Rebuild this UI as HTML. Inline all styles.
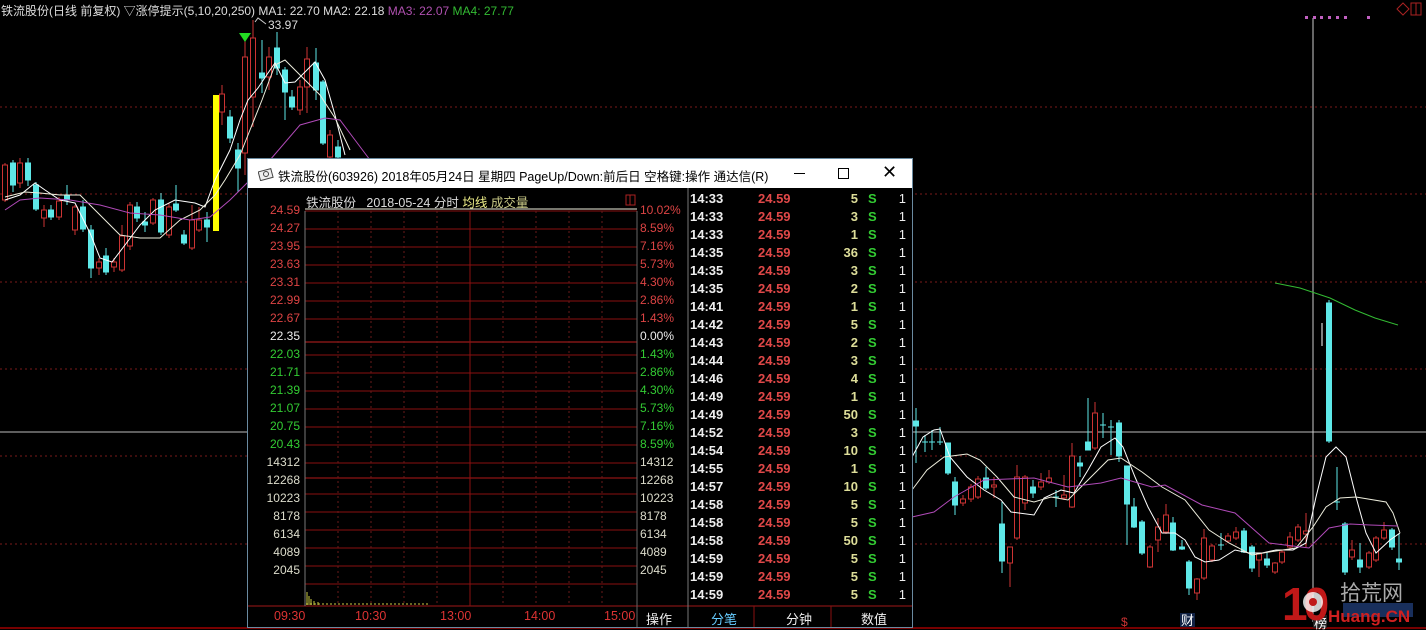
<!DOCTYPE html>
<html><head><meta charset="utf-8"><style>
body{margin:0;width:1426px;height:630px;background:#000;overflow:hidden;position:relative;font-family:"Liberation Sans","Noto Sans CJK SC",sans-serif}
.a{position:absolute;white-space:nowrap}
.top{font-size:12px;top:2px;left:1px;color:#ddd}
.win{position:absolute;left:247px;top:158px;width:664px;height:468px;border:1px solid #6a8aa0;background:#000}
.tb{position:absolute;left:0;top:0;width:664px;height:29px;background:#fff;color:#000;font-size:12.5px}
.pl{font-size:12px;width:52px;text-align:right;left:0}
.pr{font-size:12px;left:392px}
.row{position:absolute;left:442px;width:222px;height:18px;font-size:13px;font-weight:bold}
.row span{position:absolute;top:1px}
</style></head><body>
<svg width="1426" height="630" style="position:absolute;left:0;top:0">
<g stroke="#7a1a1a" stroke-dasharray="2,3" stroke-width="1">
<line x1="0" y1="107" x2="1426" y2="107"/><line x1="0" y1="194" x2="1426" y2="194"/><line x1="0" y1="282" x2="1426" y2="282"/><line x1="0" y1="369" x2="1426" y2="369"/><line x1="0" y1="456" x2="1426" y2="456"/><line x1="0" y1="544" x2="1426" y2="544"/>
</g>
<line x1="0" y1="432" x2="1426" y2="432" stroke="#bbb"/>
<line x1="1313" y1="18" x2="1313" y2="622" stroke="#ccc"/>
<rect x="213" y="95" width="6" height="136" fill="#ff0"/>
<g stroke-width="1">
<g stroke="#c33" fill="#000">
<line x1="5" y1="163" x2="5" y2="202"/><rect x="2.5" y="165" width="5" height="35"/>
<line x1="20" y1="158" x2="20" y2="188"/><rect x="17.5" y="163" width="5" height="20"/>
<line x1="44" y1="205" x2="44" y2="227"/><rect x="41.5" y="210" width="5" height="8"/>
<line x1="59" y1="197" x2="59" y2="220"/><rect x="56.5" y="201" width="5" height="16"/>
<line x1="75" y1="205" x2="75" y2="235"/><rect x="72.5" y="207" width="5" height="23"/>
<line x1="99" y1="258" x2="99" y2="275"/><rect x="96.5" y="262" width="5" height="6"/>
<line x1="114" y1="258" x2="114" y2="272"/><rect x="111.5" y="262" width="5" height="5"/>
<line x1="122" y1="225" x2="122" y2="272"/><rect x="119.5" y="236" width="5" height="34"/>
<line x1="130" y1="202" x2="130" y2="250"/><rect x="127.5" y="205" width="5" height="41"/>
<line x1="153" y1="198" x2="153" y2="225"/><rect x="150.5" y="200" width="5" height="23"/>
<line x1="169" y1="203" x2="169" y2="238"/><rect x="166.5" y="207" width="5" height="28"/>
<line x1="192" y1="205" x2="192" y2="250"/><rect x="189.5" y="220" width="5" height="28"/>
<line x1="199" y1="207" x2="199" y2="232"/><rect x="196.5" y="220" width="5" height="10"/>
<line x1="222" y1="85" x2="222" y2="125"/><rect x="219.5" y="94" width="5" height="18"/>
<line x1="245" y1="40" x2="245" y2="175"/><rect x="242.5" y="57" width="5" height="96"/>
<line x1="253" y1="20" x2="253" y2="127"/><rect x="250.5" y="38" width="5" height="59"/>
<line x1="269" y1="47" x2="269" y2="90"/><rect x="266.5" y="57" width="5" height="20"/>
<line x1="300" y1="80" x2="300" y2="115"/><rect x="297.5" y="87" width="5" height="23"/>
<line x1="307" y1="47" x2="307" y2="113"/><rect x="304.5" y="59" width="5" height="28"/>
<line x1="330" y1="130" x2="330" y2="160"/><rect x="327.5" y="135" width="5" height="22"/>
</g>
<g stroke="#5ee8e8" fill="#5ee8e8">
<line x1="13" y1="160" x2="13" y2="192"/><rect x="10.5" y="163" width="5" height="22"/>
<line x1="28" y1="158" x2="28" y2="186"/><rect x="25.5" y="163" width="5" height="17"/>
<line x1="36" y1="182" x2="36" y2="211"/><rect x="33.5" y="185" width="5" height="24"/>
<line x1="51" y1="205" x2="51" y2="220"/><rect x="48.5" y="210" width="5" height="7"/>
<line x1="67" y1="185" x2="67" y2="205"/><rect x="64.5" y="195" width="5" height="5"/>
<line x1="83" y1="200" x2="83" y2="232"/><rect x="80.5" y="207" width="5" height="22"/>
<line x1="91" y1="225" x2="91" y2="278"/><rect x="88.5" y="230" width="5" height="38"/>
<line x1="106" y1="248" x2="106" y2="275"/><rect x="103.5" y="256" width="5" height="16"/>
<line x1="137" y1="202" x2="137" y2="222"/><rect x="134.5" y="207" width="5" height="11"/>
<line x1="145" y1="212" x2="145" y2="232"/><rect x="142.5" y="222" width="5" height="3"/>
<line x1="161" y1="193" x2="161" y2="235"/><rect x="158.5" y="200" width="5" height="32"/>
<line x1="176" y1="185" x2="176" y2="212"/><rect x="173.5" y="204" width="5" height="6"/>
<line x1="184" y1="230" x2="184" y2="245"/><rect x="181.5" y="235" width="5" height="8"/>
<line x1="207" y1="212" x2="207" y2="242"/><rect x="204.5" y="220" width="5" height="7"/>
<line x1="230" y1="110" x2="230" y2="143"/><rect x="227.5" y="117" width="5" height="21"/>
<line x1="238" y1="143" x2="238" y2="192"/><rect x="235.5" y="150" width="5" height="18"/>
<line x1="262" y1="40" x2="262" y2="93"/><rect x="259.5" y="73" width="5" height="5"/>
<line x1="277" y1="32" x2="277" y2="75"/><rect x="274.5" y="48" width="5" height="20"/>
<line x1="285" y1="67" x2="285" y2="120"/><rect x="282.5" y="70" width="5" height="22"/>
<line x1="292" y1="90" x2="292" y2="110"/><rect x="289.5" y="97" width="5" height="10"/>
<line x1="316" y1="48" x2="316" y2="100"/><rect x="313.5" y="63" width="5" height="27"/>
<line x1="323" y1="80" x2="323" y2="145"/><rect x="320.5" y="82" width="5" height="61"/>
<line x1="338" y1="140" x2="338" y2="160"/><rect x="335.5" y="147" width="5" height="10"/>
</g>
<polygon points="239,33 251,33 245,42" fill="#2d2"/>
<text x="268" y="29" fill="#ddd" font-size="12" font-family="Liberation Sans">33.97</text>
<polyline points="255,22 258,18 266,24" stroke="#ccc" fill="none"/>
<polyline fill="none" stroke="#fff" points="5,200 20,195 35,183 45,190 60,200 75,203 90,233 100,258 112,262 125,245 140,225 155,210 175,200 195,203 205,207 215,180 230,150 240,120 248,100 258,88 268,73 275,63 285,83 295,82 305,72 315,62 325,80 335,115 345,155"/>
<polyline fill="none" stroke="#eed" points="5,197 25,192 40,193 60,195 80,195 100,215 120,235 140,238 160,238 180,220 200,210 215,195 225,180 240,155 250,130 262,100 275,65 285,60 300,75 320,95 335,118 350,150"/>
<polyline fill="none" stroke="#b04ab8" points="5,210 20,200 40,198 70,200 100,205 130,213 160,215 190,220 210,217 230,200 245,185 270,160 300,125 325,118 340,120 355,140 370,160"/>
<g stroke="#c33" fill="#000">
<line x1="963" y1="495" x2="963" y2="506"/><rect x="960.5" y="499" width="5" height="4"/>
<line x1="971" y1="484" x2="971" y2="502"/><rect x="968.5" y="487" width="5" height="12"/>
<line x1="978" y1="476" x2="978" y2="499"/><rect x="975.5" y="479" width="5" height="18"/>
<line x1="994" y1="477" x2="994" y2="498"/><rect x="991.5" y="485" width="5" height="2"/>
<line x1="1010" y1="547" x2="1010" y2="587"/><rect x="1007.5" y="547" width="5" height="16"/>
<line x1="1017" y1="465" x2="1017" y2="540"/><rect x="1014.5" y="477" width="5" height="61"/>
<line x1="1025" y1="475" x2="1025" y2="510"/><rect x="1022.5" y="477" width="5" height="26"/>
<line x1="1041" y1="473" x2="1041" y2="490"/><rect x="1038.5" y="482" width="5" height="5"/>
<line x1="1049" y1="470" x2="1049" y2="484"/><rect x="1046.5" y="478" width="5" height="4"/>
<line x1="1064" y1="475" x2="1064" y2="500"/><rect x="1061.5" y="495" width="5" height="3"/>
<line x1="1072" y1="443" x2="1072" y2="508"/><rect x="1069.5" y="456" width="5" height="51"/>
<line x1="1095" y1="402" x2="1095" y2="450"/><rect x="1092.5" y="413" width="5" height="35"/>
<line x1="1150" y1="545" x2="1150" y2="568"/><rect x="1147.5" y="547" width="5" height="20"/>
<line x1="1158" y1="518" x2="1158" y2="552"/><rect x="1155.5" y="527" width="5" height="13"/>
<line x1="1166" y1="504" x2="1166" y2="534"/><rect x="1163.5" y="515" width="5" height="17"/>
<line x1="1197" y1="578" x2="1197" y2="600"/><rect x="1194.5" y="579" width="5" height="14"/>
<line x1="1204" y1="529" x2="1204" y2="580"/><rect x="1201.5" y="538" width="5" height="40"/>
<line x1="1212" y1="544" x2="1212" y2="562"/><rect x="1209.5" y="546" width="5" height="14"/>
<line x1="1228" y1="533" x2="1228" y2="543"/><rect x="1225.5" y="536" width="5" height="5"/>
<line x1="1236" y1="527" x2="1236" y2="540"/><rect x="1233.5" y="532" width="5" height="6"/>
<line x1="1259" y1="553" x2="1259" y2="577"/><rect x="1256.5" y="554" width="5" height="6"/>
<line x1="1275" y1="562" x2="1275" y2="574"/><rect x="1272.5" y="563" width="5" height="9"/>
<line x1="1282" y1="550" x2="1282" y2="564"/><rect x="1279.5" y="552" width="5" height="10"/>
<line x1="1290" y1="532" x2="1290" y2="550"/><rect x="1287.5" y="537" width="5" height="10"/>
<line x1="1298" y1="524" x2="1298" y2="542"/><rect x="1295.5" y="527" width="5" height="13"/>
<line x1="1306" y1="513" x2="1306" y2="547"/><rect x="1303.5" y="531" width="5" height="3"/>
<line x1="1352" y1="540" x2="1352" y2="560"/><rect x="1349.5" y="550" width="5" height="7"/>
<line x1="1369" y1="551" x2="1369" y2="569"/><rect x="1366.5" y="553" width="5" height="14"/>
<line x1="1376" y1="536" x2="1376" y2="562"/><rect x="1373.5" y="538" width="5" height="22"/>
<line x1="1384" y1="522" x2="1384" y2="540"/><rect x="1381.5" y="530" width="5" height="8"/>
</g>
<g stroke="#5ee8e8" fill="#5ee8e8">
<line x1="916" y1="408" x2="916" y2="463"/><rect x="913.5" y="421" width="5" height="5"/>
<line x1="925" y1="435" x2="925" y2="452"/><line x1="922" y1="442" x2="928" y2="442"/>
<line x1="932" y1="430" x2="932" y2="450"/><line x1="929" y1="442" x2="935" y2="442"/>
<line x1="940" y1="427" x2="940" y2="445"/><line x1="937" y1="442" x2="943" y2="442"/>
<line x1="948" y1="443" x2="948" y2="475"/><rect x="945.5" y="443" width="5" height="30"/>
<line x1="955" y1="477" x2="955" y2="515"/><rect x="952.5" y="482" width="5" height="23"/>
<line x1="986" y1="467" x2="986" y2="490"/><rect x="983.5" y="478" width="5" height="10"/>
<line x1="1002" y1="502" x2="1002" y2="573"/><rect x="999.5" y="524" width="5" height="37"/>
<line x1="1033" y1="480" x2="1033" y2="498"/><rect x="1030.5" y="487" width="5" height="6"/>
<line x1="1056" y1="490" x2="1056" y2="507"/><line x1="1053" y1="497" x2="1059" y2="497"/>
<line x1="1080" y1="456" x2="1080" y2="477"/><rect x="1077.5" y="463" width="5" height="3"/>
<line x1="1088" y1="398" x2="1088" y2="450"/><rect x="1085.5" y="442" width="5" height="8"/>
<line x1="1103" y1="413" x2="1103" y2="438"/><line x1="1100" y1="425" x2="1106" y2="425"/>
<line x1="1111" y1="420" x2="1111" y2="455"/><line x1="1108" y1="427" x2="1114" y2="427"/>
<line x1="1119" y1="420" x2="1119" y2="462"/><rect x="1116.5" y="423" width="5" height="33"/>
<line x1="1127" y1="466" x2="1127" y2="545"/><rect x="1124.5" y="466" width="5" height="38"/>
<line x1="1134" y1="498" x2="1134" y2="528"/><rect x="1131.5" y="507" width="5" height="20"/>
<line x1="1142" y1="520" x2="1142" y2="555"/><rect x="1139.5" y="522" width="5" height="31"/>
<line x1="1173" y1="517" x2="1173" y2="551"/><rect x="1170.5" y="523" width="5" height="27"/>
<line x1="1182" y1="540" x2="1182" y2="550"/><rect x="1179.5" y="547" width="5" height="2"/>
<line x1="1189" y1="560" x2="1189" y2="595"/><rect x="1186.5" y="562" width="5" height="26"/>
<line x1="1221" y1="533" x2="1221" y2="550"/><line x1="1218" y1="545" x2="1224" y2="545"/>
<line x1="1244" y1="528" x2="1244" y2="553"/><rect x="1241.5" y="531" width="5" height="21"/>
<line x1="1252" y1="545" x2="1252" y2="572"/><rect x="1249.5" y="547" width="5" height="21"/>
<line x1="1267" y1="552" x2="1267" y2="568"/><rect x="1264.5" y="559" width="5" height="6"/>
<line x1="1329" y1="300" x2="1329" y2="443"/><rect x="1326.5" y="303" width="5" height="138"/>
<line x1="1337" y1="467" x2="1337" y2="510"/><line x1="1334" y1="502" x2="1340" y2="502"/>
<line x1="1345" y1="522" x2="1345" y2="575"/><rect x="1342.5" y="524" width="5" height="48"/>
<line x1="1360" y1="543" x2="1360" y2="573"/><rect x="1357.5" y="560" width="5" height="7"/>
<line x1="1392" y1="528" x2="1392" y2="550"/><rect x="1389.5" y="530" width="5" height="17"/>
<line x1="1399" y1="533" x2="1399" y2="570"/><rect x="1396.5" y="559" width="5" height="3"/>
</g>
<line x1="1322" y1="323" x2="1322" y2="346" stroke="#fff"/>
<polyline fill="none" stroke="#fff" points="912,457 923,437 934,430 940,429 950,457 967,477 984,490 1001,500 1011,512 1034,515 1044,498 1061,490 1074,493 1088,470 1101,447 1115,438 1123,447 1135,477 1148,507 1162,533 1175,533 1185,540 1195,557 1205,562 1219,560 1235,550 1249,553 1262,553 1276,550 1293,550 1306,543 1316,497 1326,457 1336,447 1346,457 1356,497 1366,533 1376,553 1390,540 1400,533"/>
<polyline fill="none" stroke="#eed" points="912,490 927,470 944,457 967,454 980,460 997,477 1014,497 1034,502 1051,497 1068,500 1088,480 1108,460 1121,458 1142,472 1162,487 1185,500 1209,530 1229,543 1252,555 1269,552 1296,548 1313,527 1326,507 1340,498 1356,497 1386,502 1393,513 1400,533"/>
<polyline fill="none" stroke="#b04ab8" points="912,517 934,512 954,497 984,480 1034,478 1068,487 1101,483 1121,478 1152,487 1165,485 1202,505 1235,513 1269,543 1309,548 1329,528 1350,524 1370,525 1398,526"/>
<polyline fill="none" stroke="#3b3" points="1275,283 1300,288 1330,298 1355,310 1375,318 1398,325"/>
</g>
<g fill="#c060c0"><rect x="1305" y="16" width="3" height="3"/><rect x="1313" y="16" width="3" height="3"/><rect x="1320" y="16" width="3" height="3"/><rect x="1328" y="16" width="3" height="3"/><rect x="1336" y="16" width="3" height="3"/><rect x="1344" y="16" width="3" height="3"/><rect x="1367" y="16" width="3" height="3"/></g>
<polygon points="1403,3 1409,9 1403,15 1397,9" fill="none" stroke="#a22"/>
<rect x="1411" y="3" width="10" height="12" fill="none" stroke="#a22"/><line x1="1416" y1="3" x2="1416" y2="15" stroke="#a22"/>
<line x1="0" y1="628" x2="1426" y2="628" stroke="#700" stroke-width="2"/>
<text x="1121" y="626" fill="#c33" font-size="12">$</text>
<rect x="1180" y="613" width="15" height="14" fill="#124"/><text x="1181" y="625" fill="#fff" font-size="13" font-family="Noto Sans CJK SC">财</text>
<rect x="1313" y="615" width="14" height="13" fill="#222"/><text x="1314" y="628" fill="#fff" font-size="13" font-family="Noto Sans CJK SC">榜</text>
<text x="1282" y="620" fill="#c01818" font-size="46" font-weight="bold" font-family="Liberation Sans" letter-spacing="-4">10</text>
<circle cx="1313" cy="602" r="10" fill="#fff" opacity=".8"/><circle cx="1313" cy="602" r="4" fill="#c01818"/>
<text x="1340" y="600" fill="#aaa" font-size="21" font-family="Noto Sans CJK SC">拾荒网</text>
<rect x="1343" y="603" width="70" height="14" fill="#2a4f9a" opacity=".6"/>
<text x="1328" y="622" fill="#d02020" font-size="17" font-family="Liberation Sans" font-weight="bold">Huang.CN</text>
</svg>

<div class="a top">铁流股份(日线 前复权) ▽涨停提示(5,10,20,250) MA1: 22.70 MA2: 22.18 <span style="color:#b050b0">MA3: 22.07</span> <span style="color:#3b3">MA4: 27.77</span></div>

<div class="win">
<div class="tb">
<svg width="16" height="14" style="position:absolute;left:10px;top:8px"><rect x="1" y="3" width="13" height="9" fill="#eee" stroke="#444" transform="rotate(-15 8 7)"/><circle cx="8" cy="7" r="2.5" fill="none" stroke="#444"/></svg>
<div class="a" style="left:30px;top:7px">铁流股份(603926) 2018年05月24日 星期四 PageUp/Down:前后日 空格键:操作 通达信(R)</div>
<div class="a" style="left:546px;top:14px;width:11px;height:1px;background:#000"></div>
<div class="a" style="left:590px;top:9px;width:9px;height:9px;border:1px solid #000"></div>
<div class="a" style="left:634px;top:3px;font-size:18px">✕</div>
</div>
<svg width="664" height="439" style="position:absolute;left:0;top:29px">
<g stroke="#8a1010">
<line x1="57" y1="23" x2="389" y2="23"/><line x1="57" y1="41" x2="389" y2="41"/><line x1="57" y1="59" x2="389" y2="59"/><line x1="57" y1="77" x2="389" y2="77"/><line x1="57" y1="95" x2="389" y2="95"/><line x1="57" y1="113" x2="389" y2="113"/><line x1="57" y1="131" x2="389" y2="131"/>
<line x1="57" y1="154" x2="389" y2="154" stroke="#c02020"/>
<line x1="57" y1="167" x2="389" y2="167"/><line x1="57" y1="185" x2="389" y2="185"/><line x1="57" y1="203" x2="389" y2="203"/><line x1="57" y1="221" x2="389" y2="221"/><line x1="57" y1="239" x2="389" y2="239"/><line x1="57" y1="257" x2="389" y2="257"/><line x1="57" y1="275" x2="389" y2="275"/>
<line x1="57" y1="290" x2="389" y2="290" stroke="#b01818"/>
<line x1="57" y1="306" x2="389" y2="306"/><line x1="57" y1="324" x2="389" y2="324"/><line x1="57" y1="342" x2="389" y2="342"/><line x1="57" y1="360" x2="389" y2="360"/><line x1="57" y1="378" x2="389" y2="378"/><line x1="57" y1="396" x2="389" y2="396"/>
<line x1="0" y1="418" x2="664" y2="418" stroke="#a01818"/>
<line x1="222" y1="23" x2="222" y2="418"/>
<line x1="389" y1="23" x2="389" y2="439" stroke="#666"/>
<line x1="440" y1="0" x2="440" y2="439" stroke="#777"/>
<line x1="506" y1="418" x2="506" y2="439"/><line x1="583" y1="418" x2="583" y2="439"/>
<line x1="57" y1="23" x2="57" y2="418" stroke="#777"/>
</g>
<g stroke="#6a1a1a" stroke-dasharray="2,3"><line x1="90" y1="23" x2="90" y2="418"/><line x1="123" y1="23" x2="123" y2="418"/><line x1="156" y1="23" x2="156" y2="418"/><line x1="189" y1="23" x2="189" y2="418"/><line x1="255" y1="23" x2="255" y2="418"/><line x1="288" y1="23" x2="288" y2="418"/><line x1="321" y1="23" x2="321" y2="418"/><line x1="354" y1="23" x2="354" y2="418"/></g>
<line x1="57" y1="21" x2="389" y2="21" stroke="#eed"/>
<rect x="378" y="7" width="9" height="10" fill="none" stroke="#a22"/><line x1="382" y1="7" x2="382" y2="17" stroke="#a22"/>
<g stroke="#cc4"><line x1="59" y1="417" x2="59" y2="404"/><line x1="61" y1="417" x2="61" y2="408"/><line x1="63" y1="417" x2="63" y2="411"/><line x1="66" y1="417" x2="66" y2="413"/><line x1="70" y1="417" x2="70" y2="414"/><line x1="58" y1="416" x2="180" y2="416" stroke-dasharray="2,2"/></g>
</svg>
<div class="a" style="left:58px;top:33px;font-size:12.5px;color:#ddd">铁流股份 &nbsp; 2018-05-24 分时 <span style="color:#ee8">均线</span> <span style="color:#cc8">成交量</span></div>
<div style="position:absolute;left:0;top:44px;width:664px;font-size:12px">
<div class="a pl" style="top:0;color:#d44">24.59</div><div class="a pr" style="top:0;color:#d44">10.02%</div>
<div class="a pl" style="top:18px;color:#d44">24.27</div><div class="a pr" style="top:18px;color:#d44">8.59%</div>
<div class="a pl" style="top:36px;color:#d44">23.95</div><div class="a pr" style="top:36px;color:#d44">7.16%</div>
<div class="a pl" style="top:54px;color:#d44">23.63</div><div class="a pr" style="top:54px;color:#d44">5.73%</div>
<div class="a pl" style="top:72px;color:#d44">23.31</div><div class="a pr" style="top:72px;color:#d44">4.30%</div>
<div class="a pl" style="top:90px;color:#d44">22.99</div><div class="a pr" style="top:90px;color:#d44">2.86%</div>
<div class="a pl" style="top:108px;color:#d44">22.67</div><div class="a pr" style="top:108px;color:#d44">1.43%</div>
<div class="a pl" style="top:126px;color:#eee">22.35</div><div class="a pr" style="top:126px;color:#eee">0.00%</div>
<div class="a pl" style="top:144px;color:#3c3">22.03</div><div class="a pr" style="top:144px;color:#3c3">1.43%</div>
<div class="a pl" style="top:162px;color:#3c3">21.71</div><div class="a pr" style="top:162px;color:#3c3">2.86%</div>
<div class="a pl" style="top:180px;color:#3c3">21.39</div><div class="a pr" style="top:180px;color:#3c3">4.30%</div>
<div class="a pl" style="top:198px;color:#3c3">21.07</div><div class="a pr" style="top:198px;color:#3c3">5.73%</div>
<div class="a pl" style="top:216px;color:#3c3">20.75</div><div class="a pr" style="top:216px;color:#3c3">7.16%</div>
<div class="a pl" style="top:234px;color:#3c3">20.43</div><div class="a pr" style="top:234px;color:#3c3">8.59%</div>
<div class="a pl" style="top:252px;color:#ddc">14312</div><div class="a pr" style="top:252px;color:#ddc">14312</div>
<div class="a pl" style="top:270px;color:#ddc">12268</div><div class="a pr" style="top:270px;color:#ddc">12268</div>
<div class="a pl" style="top:288px;color:#ddc">10223</div><div class="a pr" style="top:288px;color:#ddc">10223</div>
<div class="a pl" style="top:306px;color:#ddc">8178</div><div class="a pr" style="top:306px;color:#ddc">8178</div>
<div class="a pl" style="top:324px;color:#ddc">6134</div><div class="a pr" style="top:324px;color:#ddc">6134</div>
<div class="a pl" style="top:342px;color:#ddc">4089</div><div class="a pr" style="top:342px;color:#ddc">4089</div>
<div class="a pl" style="top:360px;color:#ddc">2045</div><div class="a pr" style="top:360px;color:#ddc">2045</div>
</div>
<div style="position:absolute;top:450px;left:0;font-size:12.5px;color:#d33">
<div class="a" style="left:26px">09:30</div><div class="a" style="left:107px">10:30</div><div class="a" style="left:192px">13:00</div><div class="a" style="left:276px">14:00</div><div class="a" style="left:356px">15:00</div>
<div class="a" style="left:398px;color:#eee;font-size:13px">操作</div>
<div class="a" style="left:463px;color:#6cf;font-size:13px">分笔</div>
<div class="a" style="left:538px;color:#eee;font-size:13px">分钟</div>
<div class="a" style="left:613px;color:#eee;font-size:13px">数值</div>
</div>
<div style="position:absolute;left:0;top:31px">
<div class="row" style="top:0"><span style="left:0;color:#eee">14:33</span><span style="left:68px;color:#e04848">24.59</span><span style="right:54px;color:#dd9">5</span><span style="left:178px;color:#3c3">S</span><span style="right:6px;color:#eee;font-weight:normal">1</span></div>
<div class="row" style="top:18px"><span style="left:0;color:#eee">14:33</span><span style="left:68px;color:#e04848">24.59</span><span style="right:54px;color:#dd9">3</span><span style="left:178px;color:#3c3">S</span><span style="right:6px;color:#eee;font-weight:normal">1</span></div>
<div class="row" style="top:36px"><span style="left:0;color:#eee">14:33</span><span style="left:68px;color:#e04848">24.59</span><span style="right:54px;color:#dd9">1</span><span style="left:178px;color:#3c3">S</span><span style="right:6px;color:#eee;font-weight:normal">1</span></div>
<div class="row" style="top:54px"><span style="left:0;color:#eee">14:35</span><span style="left:68px;color:#e04848">24.59</span><span style="right:54px;color:#dd9">36</span><span style="left:178px;color:#3c3">S</span><span style="right:6px;color:#eee;font-weight:normal">1</span></div>
<div class="row" style="top:72px"><span style="left:0;color:#eee">14:35</span><span style="left:68px;color:#e04848">24.59</span><span style="right:54px;color:#dd9">3</span><span style="left:178px;color:#3c3">S</span><span style="right:6px;color:#eee;font-weight:normal">1</span></div>
<div class="row" style="top:90px"><span style="left:0;color:#eee">14:35</span><span style="left:68px;color:#e04848">24.59</span><span style="right:54px;color:#dd9">2</span><span style="left:178px;color:#3c3">S</span><span style="right:6px;color:#eee;font-weight:normal">1</span></div>
<div class="row" style="top:108px"><span style="left:0;color:#eee">14:41</span><span style="left:68px;color:#e04848">24.59</span><span style="right:54px;color:#dd9">1</span><span style="left:178px;color:#3c3">S</span><span style="right:6px;color:#eee;font-weight:normal">1</span></div>
<div class="row" style="top:126px"><span style="left:0;color:#eee">14:42</span><span style="left:68px;color:#e04848">24.59</span><span style="right:54px;color:#dd9">5</span><span style="left:178px;color:#3c3">S</span><span style="right:6px;color:#eee;font-weight:normal">1</span></div>
<div class="row" style="top:144px"><span style="left:0;color:#eee">14:43</span><span style="left:68px;color:#e04848">24.59</span><span style="right:54px;color:#dd9">2</span><span style="left:178px;color:#3c3">S</span><span style="right:6px;color:#eee;font-weight:normal">1</span></div>
<div class="row" style="top:162px"><span style="left:0;color:#eee">14:44</span><span style="left:68px;color:#e04848">24.59</span><span style="right:54px;color:#dd9">3</span><span style="left:178px;color:#3c3">S</span><span style="right:6px;color:#eee;font-weight:normal">1</span></div>
<div class="row" style="top:180px"><span style="left:0;color:#eee">14:46</span><span style="left:68px;color:#e04848">24.59</span><span style="right:54px;color:#dd9">4</span><span style="left:178px;color:#3c3">S</span><span style="right:6px;color:#eee;font-weight:normal">1</span></div>
<div class="row" style="top:198px"><span style="left:0;color:#eee">14:49</span><span style="left:68px;color:#e04848">24.59</span><span style="right:54px;color:#dd9">1</span><span style="left:178px;color:#3c3">S</span><span style="right:6px;color:#eee;font-weight:normal">1</span></div>
<div class="row" style="top:216px"><span style="left:0;color:#eee">14:49</span><span style="left:68px;color:#e04848">24.59</span><span style="right:54px;color:#dd9">50</span><span style="left:178px;color:#3c3">S</span><span style="right:6px;color:#eee;font-weight:normal">1</span></div>
<div class="row" style="top:234px"><span style="left:0;color:#eee">14:52</span><span style="left:68px;color:#e04848">24.59</span><span style="right:54px;color:#dd9">3</span><span style="left:178px;color:#3c3">S</span><span style="right:6px;color:#eee;font-weight:normal">1</span></div>
<div class="row" style="top:252px"><span style="left:0;color:#eee">14:54</span><span style="left:68px;color:#e04848">24.59</span><span style="right:54px;color:#dd9">10</span><span style="left:178px;color:#3c3">S</span><span style="right:6px;color:#eee;font-weight:normal">1</span></div>
<div class="row" style="top:270px"><span style="left:0;color:#eee">14:55</span><span style="left:68px;color:#e04848">24.59</span><span style="right:54px;color:#dd9">1</span><span style="left:178px;color:#3c3">S</span><span style="right:6px;color:#eee;font-weight:normal">1</span></div>
<div class="row" style="top:288px"><span style="left:0;color:#eee">14:57</span><span style="left:68px;color:#e04848">24.59</span><span style="right:54px;color:#dd9">10</span><span style="left:178px;color:#3c3">S</span><span style="right:6px;color:#eee;font-weight:normal">1</span></div>
<div class="row" style="top:306px"><span style="left:0;color:#eee">14:58</span><span style="left:68px;color:#e04848">24.59</span><span style="right:54px;color:#dd9">5</span><span style="left:178px;color:#3c3">S</span><span style="right:6px;color:#eee;font-weight:normal">1</span></div>
<div class="row" style="top:324px"><span style="left:0;color:#eee">14:58</span><span style="left:68px;color:#e04848">24.59</span><span style="right:54px;color:#dd9">5</span><span style="left:178px;color:#3c3">S</span><span style="right:6px;color:#eee;font-weight:normal">1</span></div>
<div class="row" style="top:342px"><span style="left:0;color:#eee">14:58</span><span style="left:68px;color:#e04848">24.59</span><span style="right:54px;color:#dd9">50</span><span style="left:178px;color:#3c3">S</span><span style="right:6px;color:#eee;font-weight:normal">1</span></div>
<div class="row" style="top:360px"><span style="left:0;color:#eee">14:59</span><span style="left:68px;color:#e04848">24.59</span><span style="right:54px;color:#dd9">5</span><span style="left:178px;color:#3c3">S</span><span style="right:6px;color:#eee;font-weight:normal">1</span></div>
<div class="row" style="top:378px"><span style="left:0;color:#eee">14:59</span><span style="left:68px;color:#e04848">24.59</span><span style="right:54px;color:#dd9">5</span><span style="left:178px;color:#3c3">S</span><span style="right:6px;color:#eee;font-weight:normal">1</span></div>
<div class="row" style="top:396px"><span style="left:0;color:#eee">14:59</span><span style="left:68px;color:#e04848">24.59</span><span style="right:54px;color:#dd9">5</span><span style="left:178px;color:#3c3">S</span><span style="right:6px;color:#eee;font-weight:normal">1</span></div>
</div>
</div>
</body></html>
